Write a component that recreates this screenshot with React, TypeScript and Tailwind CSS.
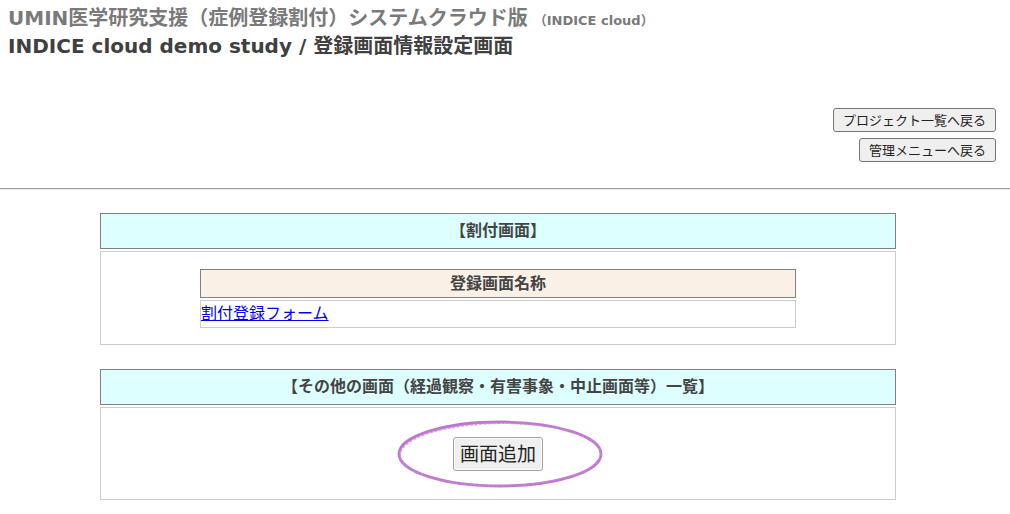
const font = {
  fontFamily: '"DejaVu Sans", "Noto Sans CJK JP", sans-serif',
};

function SectionHeader({ children }: { children: React.ReactNode }) {
  return (
    <div className="h-[36px] border border-[#808080] bg-[#ddffff] flex items-center justify-center text-[16px] font-bold text-[#444]">
      {children}
    </div>
  );
}

function GrayButton({ children, className = "" }: { children: React.ReactNode; className?: string }) {
  return (
    <button
      className={`rounded-[3px] border border-[#767676] bg-[#efefef] text-[#222] leading-none ${className}`}
    >
      {children}
    </button>
  );
}

export default function App() {
  return (
    <div className="w-[1010px] h-[514px] bg-white overflow-hidden" style={font}>
      <div className="pl-[8px] pt-[4px]">
        <h1 className="text-[20px] font-bold text-[#7a7a7a] leading-[28px] flex items-baseline">
          <span>UMIN医学研究支援（症例登録割付）システムクラウド版</span>
          <span className="text-[13px] ml-[6px]">（INDICE cloud）</span>
        </h1>
        <h2 className="text-[20px] font-bold text-[#404040] leading-[28px] -mt-[3px]">
          INDICE cloud demo study / 登録画面情報設定画面
        </h2>
      </div>

      <div className="mt-[48px] pr-[14px] flex flex-col items-end gap-[6px]">
        <GrayButton className="h-[24px] px-[9px] text-[13px]">プロジェクト一覧へ戻る</GrayButton>
        <GrayButton className="h-[24px] px-[9px] text-[13px]">管理メニューへ戻る</GrayButton>
      </div>

      <div className="mt-[26px] border-t border-[#9a9a9a] border-b border-b-[#eeeeee]" />

      <div className="ml-[100px] w-[796px] mt-[23px]">
        <SectionHeader>【割付画面】</SectionHeader>
        <div className="mt-[2px] h-[94px] border border-[#cccccc] flex flex-col items-center pt-[17px]">
          <div className="w-[596px]">
            <div className="h-[29px] border border-[#808080] bg-[#faf0e6] flex items-center justify-center text-[16px] font-bold text-[#444]">
              登録画面名称
            </div>
            <div className="mt-[2px] h-[28px] border border-[#cccccc] flex items-center">
              <a href="#" className="text-[16px] text-[#0000ee] underline leading-none">
                割付登録フォーム
              </a>
            </div>
          </div>
        </div>

        <div className="mt-[24px]">
          <SectionHeader>【その他の画面（経過観察・有害事象・中止画面等）一覧】</SectionHeader>
        </div>
        <div className="mt-[2px] h-[93px] border border-[#cccccc] flex justify-center pt-[29px]">
          <div className="relative">
            <GrayButton className="h-[34px] w-[90px] text-[19px] border-[#a0a0a0] shadow-[inset_0_0_0_1px_#ffffff]">
              画面追加
            </GrayButton>
            <svg
              className="absolute left-[-57px] top-[-18px] pointer-events-none"
              width="210"
              height="72"
              viewBox="0 0 210 72"
            >
              <ellipse
                cx="104"
                cy="35"
                rx="101"
                ry="32"
                fill="none"
                stroke="#ad55bf"
                strokeWidth="2.8"
                strokeOpacity="0.8"
              />
              <ellipse
                cx="104.5"
                cy="35.5"
                rx="100.5"
                ry="31.2"
                fill="none"
                stroke="#c98ad4"
                strokeWidth="1.6"
                strokeOpacity="0.7"
                strokeDasharray="3 1.5"
                transform="rotate(-0.6 104 35)"
              />
            </svg>
          </div>
        </div>
      </div>
    </div>
  );
}
